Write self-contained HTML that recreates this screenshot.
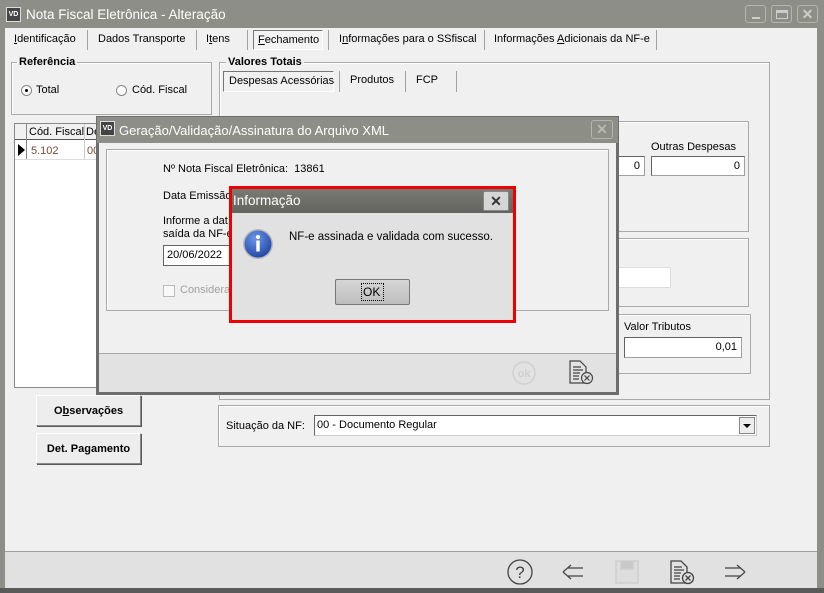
<!DOCTYPE html>
<html><head><meta charset="utf-8">
<style>
*{margin:0;padding:0;box-sizing:border-box}
body{width:824px;height:593px;overflow:hidden;background:#f0f0f0;font-family:"Liberation Sans",sans-serif;font-size:11px;color:#000;position:relative}
.a{position:absolute}
.t{position:absolute;white-space:nowrap}
.grp{position:absolute;border:1px solid #a9a9a9;box-shadow:1px 1px 0 #fff inset}
.inp{position:absolute;background:#fff;border:1px solid #a0a0a0;border-top-color:#646464;border-left-color:#646464;text-align:right;padding-right:4px;line-height:18px}
.btn{position:absolute;background:#ededed;border:1px solid #8a8a8a;border-top-color:#fff;border-left-color:#fff;box-shadow:1px 1px 0 #5a5a5a;font-weight:bold;text-align:center;font-size:11px}
.sep{position:absolute;width:1px;background:#a0a0a0}
u{text-decoration:underline}
</style></head><body>
<div class="a" style="left:0;top:0;width:824px;height:28px;background:#8e8e88"></div>
<div class="a" style="left:0;top:0;width:5px;height:593px;background:#8e8e88"></div>
<div class="a" style="left:817px;top:0;width:7px;height:593px;background:#8e8e88"></div>
<div class="a" style="left:0;top:588px;width:824px;height:5px;background:#5a5a5a"></div>
<div class="a" style="left:6px;top:7px;width:15px;height:15px;background:#444;color:#fff;font-size:7px;font-weight:bold;text-align:center;line-height:13px;border:1px solid #ddd">VD</div>
<div class="t" style="left:26px;top:7px;font-size:13.5px;color:#fff">Nota Fiscal Eletrônica - Alteração</div>
<div class="a" style="left:745px;top:5px;width:21px;height:18px;border:1px solid #b5b5b0;border-radius:3px"><div class="a" style="left:6px;top:11px;width:8px;height:2px;background:#ccc"></div></div>
<div class="a" style="left:771px;top:5px;width:21px;height:18px;border:1px solid #b5b5b0;border-radius:3px"><div class="a" style="left:4px;top:4px;width:12px;height:9px;border:1px solid #ccc;border-top-width:3px"></div></div>
<div class="a" style="left:797px;top:5px;width:21px;height:18px;border:1px solid #b5b5b0;border-radius:3px;color:#ccc;font-weight:bold;text-align:center;line-height:16px;font-size:14px">✕</div>

<div class="t" style="left:14px;top:33px"><u>I</u>dentificação</div>
<div class="sep" style="left:87px;top:30px;height:20px"></div>
<div class="t" style="left:98px;top:33px">Dados Transporte</div>
<div class="sep" style="left:196px;top:30px;height:20px"></div>
<div class="t" style="left:206px;top:33px">I<u>t</u>ens</div>
<div class="sep" style="left:247px;top:30px;height:20px"></div>
<div class="a" style="left:253px;top:30px;width:70px;height:20px;border:1px solid #777;border-right-color:#fff;border-bottom-color:#fff;background:#f3f3f3"></div>
<div class="t" style="left:258px;top:34px"><u>F</u>echamento</div>
<div class="sep" style="left:328px;top:30px;height:20px"></div>
<div class="t" style="left:339px;top:33px">I<u>n</u>formações para o SSfiscal</div>
<div class="sep" style="left:484px;top:30px;height:20px"></div>
<div class="t" style="left:494px;top:33px">Informações <u>A</u>dicionais da NF-e</div>
<div class="sep" style="left:656px;top:30px;height:20px"></div>

<div class="grp" style="left:11px;top:62px;width:201px;height:53px"></div>
<div class="t" style="left:17px;top:56px;font-weight:bold;background:#f0f0f0;padding:0 2px">Referência</div>
<div class="a" style="left:21px;top:85px;width:11px;height:11px;border-radius:50%;border:1px solid #888;background:#fff"><div class="a" style="left:3px;top:3px;width:3px;height:3px;border-radius:50%;background:#000"></div></div>
<div class="t" style="left:36px;top:84px">Total</div>
<div class="a" style="left:116px;top:85px;width:11px;height:11px;border-radius:50%;border:1px solid #888;background:#fff"></div>
<div class="t" style="left:132px;top:84px">Cód. Fiscal</div>

<div class="a" style="left:14px;top:123px;width:90px;height:265px;background:#fff;border:1px solid #888"></div>
<div class="a" style="left:15px;top:124px;width:89px;height:16px;background:#f0f0f0;border-bottom:1px solid #555"></div>
<div class="sep" style="left:26px;top:124px;height:36px;background:#888"></div>
<div class="sep" style="left:84px;top:124px;height:36px;background:#ccc"></div>
<div class="t" style="left:29px;top:126px">Cód. Fiscal</div>
<div class="t" style="left:86px;top:126px">De</div>
<div class="a" style="left:15px;top:159px;width:82px;height:1px;background:#ddd"></div>
<div class="a" style="left:18px;top:144px;width:0;height:0;border-left:7px solid #000;border-top:6px solid transparent;border-bottom:6px solid transparent"></div>
<div class="t" style="left:31px;top:145px;color:#7a4a3a">5.102</div>
<div class="t" style="left:87px;top:145px;color:#7a4a3a">00</div>

<div class="btn" style="left:36px;top:395px;width:105px;height:31px;line-height:30px">O<u>b</u>servações</div>
<div class="btn" style="left:36px;top:433px;width:105px;height:31px;line-height:30px">Det. Pa<u>g</u>amento</div>

<div class="grp" style="left:219px;top:62px;width:551px;height:338px"></div>
<div class="t" style="left:226px;top:56px;font-weight:bold;background:#f0f0f0;padding:0 2px">Valores Totais</div>
<div class="a" style="left:223px;top:71px;width:111px;height:21px;border:1px solid #777;border-right-color:#fff;border-bottom-color:#fff"></div>
<div class="t" style="left:229px;top:75px">Despesas Acessórias</div>
<div class="sep" style="left:339px;top:71px;height:21px"></div>
<div class="t" style="left:350px;top:74px">Produtos</div>
<div class="sep" style="left:405px;top:71px;height:21px"></div>
<div class="t" style="left:416px;top:74px">FCP</div>
<div class="sep" style="left:456px;top:71px;height:21px"></div>

<div class="grp" style="left:560px;top:121px;width:189px;height:111px"></div>
<div class="t" style="left:651px;top:141px">Outras Despesas</div>
<div class="inp" style="left:560px;top:156px;width:85px;height:20px">0</div>
<div class="inp" style="left:651px;top:156px;width:94px;height:20px">0</div>
<div class="grp" style="left:560px;top:238px;width:189px;height:69px"></div>
<div class="inp" style="left:560px;top:267px;width:111px;height:21px;border-color:#ddd"></div>
<div class="grp" style="left:560px;top:314px;width:191px;height:60px"></div>
<div class="t" style="left:624px;top:321px">Valor Tributos</div>
<div class="inp" style="left:624px;top:337px;width:118px;height:21px">0,01</div>

<div class="grp" style="left:218px;top:405px;width:552px;height:42px"></div>
<div class="t" style="left:226px;top:420px">Situação da NF:</div>
<div class="a" style="left:314px;top:415px;width:443px;height:21px;background:#fff;border:1px solid #646464;border-right-color:#ccc;border-bottom-color:#ccc"></div>
<div class="t" style="left:317px;top:419px">00 - Documento Regular</div>
<div class="a" style="left:739px;top:417px;width:16px;height:17px;background:#ededed;border:1px solid #888"><div class="a" style="left:3px;top:6px;border-top:4px solid #000;border-left:4px solid transparent;border-right:4px solid transparent"></div></div>

<div class="a" style="left:5px;top:551px;width:812px;height:37px;background:#e1e1e1;border-top:1px solid #a0a0a0"></div>
<svg class="a" style="left:500px;top:556px" width="260" height="32" viewBox="0 0 260 32">
<g fill="none" stroke="#444" stroke-width="1.3">
<circle cx="20" cy="16" r="12"/>
<path d="M63 16l8-7M63 16l8 7M68 12h15M68 20h15" stroke-width="1.2"/>
<rect x="116" y="5" width="22" height="22" stroke="#ccc" fill="#ddd"/><rect x="121" y="5" width="12" height="8" fill="#c8c8c8" stroke="#ccc"/>
<path d="M171 5h10l6 6v16h-16z M174 11h8M174 14h10M174 17h7M174 20h6M174 23h6"/>
<circle cx="188" cy="22" r="5.5" fill="#e1e1e1"/><path d="M185.5 19.5l5 5M190.5 19.5l-5 5"/>
<path d="M245 16l-8-7M245 16l-8 7M240 12h-15M240 20h-15" stroke-width="1.2"/>
</g>
<text x="20" y="22" font-size="17" text-anchor="middle" fill="#444" font-family="Liberation Sans">?</text>
</svg>

<div class="a" style="left:96px;top:116px;width:523px;height:279px;background:#f0f0f0;border:3px solid #6d6d6d;border-top:1px solid #6d6d6d"></div>
<div class="a" style="left:97px;top:117px;width:521px;height:26px;background:#8e8e88"></div>
<div class="a" style="left:100px;top:121px;width:15px;height:15px;background:#444;color:#fff;font-size:7px;font-weight:bold;text-align:center;line-height:13px;border:1px solid #ddd">VD</div>
<div class="t" style="left:119px;top:123px;font-size:13px;color:#fff">Geração/Validação/Assinatura do Arquivo XML</div>
<div class="a" style="left:591px;top:120px;width:22px;height:19px;border:1px solid #b5b5b0;border-radius:3px;color:#b8b8b4;font-weight:bold;text-align:center;line-height:17px;font-size:14px">✕</div>
<div class="grp" style="left:106px;top:149px;width:503px;height:162px"></div>
<div class="t" style="left:163px;top:163px">Nº Nota Fiscal Eletrônica:&nbsp; 13861</div>
<div class="t" style="left:163px;top:190px">Data Emissão</div>
<div class="t" style="left:163px;top:215px">Informe a dat</div>
<div class="t" style="left:163px;top:228px">saída da NF-e</div>
<div class="a" style="left:163px;top:245px;width:70px;height:21px;background:#fff;border:1px solid #646464;border-right:none"></div>
<div class="t" style="left:167px;top:249px">20/06/2022</div>
<div class="a" style="left:163px;top:285px;width:12px;height:12px;border:1px solid #bbb;background:#f8f8f8"></div>
<div class="t" style="left:180px;top:284px;color:#a0a0a0">Considera</div>
<div class="a" style="left:99px;top:353px;width:517px;height:39px;background:#e2e2e2;border-top:1px solid #aaa"></div>
<svg class="a" style="left:508px;top:356px" width="90" height="32" viewBox="0 0 90 32">
<circle cx="16" cy="17" r="11" fill="none" stroke="#d0d0d0" stroke-width="1.5"/>
<text x="16" y="21" font-size="11" font-weight="bold" text-anchor="middle" fill="#cfcfcf" font-family="Liberation Sans">ok</text>
<g fill="none" stroke="#444" stroke-width="1.2"><path d="M62 5h10l6 6v16h-16z M65 11h8M65 14h10M65 17h7M65 20h6M65 23h6"/><circle cx="79" cy="22" r="5.5" fill="#e2e2e2"/><path d="M76.5 19.5l5 5M81.5 19.5l-5 5"/></g>
</svg>

<div class="a" style="left:229px;top:186px;width:287px;height:137px;border:3px solid #ee0000;background:#e1e1e1"></div>
<div class="a" style="left:232px;top:189px;width:281px;height:24px;background:linear-gradient(#7a7a74,#64645f)"></div>
<div class="t" style="left:233px;top:193px;font-size:13.5px;color:#fff">Informação</div>
<div class="a" style="left:483px;top:191px;width:26px;height:20px;background:#d6d6d6;border:1px solid #888;border-radius:2px;color:#333;font-weight:bold;text-align:center;line-height:18px;font-size:14px">✕</div>
<svg class="a" style="left:242px;top:228px" width="32" height="32" viewBox="0 0 32 32">
<defs><radialGradient id="g" cx="0.4" cy="0.3" r="0.8"><stop offset="0" stop-color="#6d96e8"/><stop offset="1" stop-color="#1a3fa0"/></radialGradient></defs>
<circle cx="16" cy="16" r="15" fill="#b8b8b8"/><circle cx="16" cy="16" r="13.5" fill="url(#g)"/>
<circle cx="16" cy="9" r="2" fill="#fff"/><rect x="14.3" y="12.5" width="3.4" height="11" fill="#fff"/>
</svg>
<div class="t" style="left:289px;top:231px;font-size:11.5px">NF-e assinada e validada com sucesso.</div>
<div class="a" style="left:335px;top:279px;width:75px;height:26px;background:linear-gradient(#d6d6d6,#bdbdbd);border:1px solid #777;border-radius:2px"></div>
<div class="a" style="left:361px;top:283px;width:23px;height:18px;border:1px dotted #000"></div>
<div class="t" style="left:363px;top:285px;font-size:12px">OK</div>
</body></html>
